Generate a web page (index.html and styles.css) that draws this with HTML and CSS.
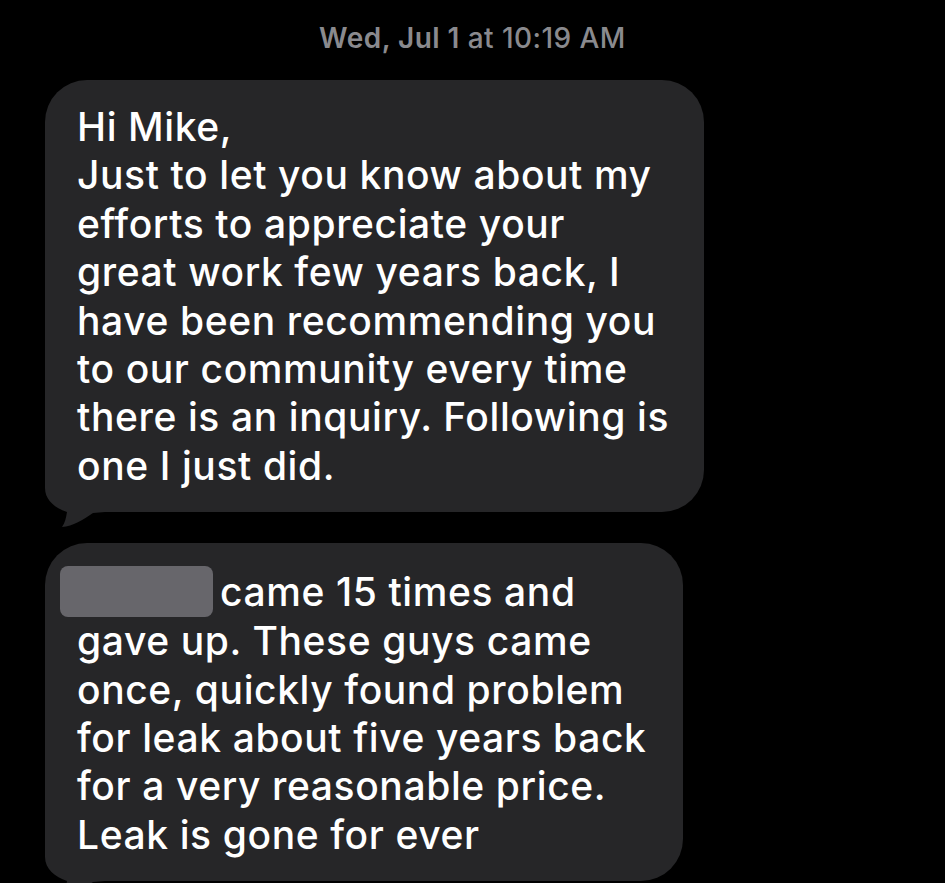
FILE: index.html
```html
<!DOCTYPE html>
<html>
<head>
<meta charset="utf-8">
<link rel="stylesheet" href="styles.css">
</head>
<body>
<div class="thread">
  <div class="timestamp"><span class="ts-day">Wed, Jul 1</span> at 10:19 AM</div>
  <div class="bubble bubble-first">
    <p class="msg">Hi Mike,<br>Just to let you know about my<br>efforts to appreciate your<br>great work few years back, I<br>have been recommending you<br>to our community every time<br>there is an inquiry. Following is<br>one I just did.</p>
    <svg class="tail" width="60" height="58" viewBox="0 0 60 58"><path d="M0,0 V18 C0,30 10,38 22,42 C21,48 20,53 17,57 C28,56 38,50 48,43 L60,42 V0 Z"/></svg>
  </div>
  <div class="bubble bubble-second">
    <p class="msg"><span class="redact"></span>came 15 times and<br>gave up. These guys came<br>once, quickly found problem<br>for leak about five years back<br>for a very reasonable price.<br>Leak is gone for ever</p>
    <svg class="tail" width="60" height="58" viewBox="0 0 60 58"><path d="M0,0 V18 C0,30 10,38 22,42 C21,48 20,53 17,57 C28,56 38,50 48,43 L60,42 V0 Z"/></svg>
  </div>
</div>
</body>
</html>
```
FILE: styles.css
```css
html, body {
  margin: 0;
  padding: 0;
  background: #000;
}
body {
  font-family: Inter, "Noto Sans", "Liberation Sans", sans-serif;
  color: #fff;
  overflow: hidden;
  height: 883px;
}
.thread {
  display: flex;
  flex-direction: column;
  align-items: flex-start;
  padding-top: 21px;
}
.timestamp {
  align-self: center;
  font-size: 28px;
  line-height: 34px;
  color: #8a8a8e;
  font-weight: 500;
  letter-spacing: 0.45px;
}
.ts-day {
  font-weight: 600;
}
.bubble {
  position: relative;
  margin-left: 45px;
  background: #262628;
  border-radius: 42px;
  padding: 23px 0 22px 32px;
  box-sizing: border-box;
}
.bubble-first {
  width: 659px;
  margin-top: 25px;
}
.bubble-second {
  width: 638px;
  margin-top: 31px;
}
.msg {
  margin: 0;
  font-size: 39px;
  font-weight: 500;
  letter-spacing: 0.6px;
  line-height: 48.4px;
  white-space: nowrap;
  position: relative;
  z-index: 1;
}
.redact {
  display: inline-block;
  width: 153px;
  height: 51px;
  background: #67666b;
  border-radius: 8px;
  vertical-align: -11px;
  margin-left: -17px;
  margin-right: 7px;
}
.tail {
  position: absolute;
  left: 0;
  bottom: -16px;
  fill: #262628;
}
```
